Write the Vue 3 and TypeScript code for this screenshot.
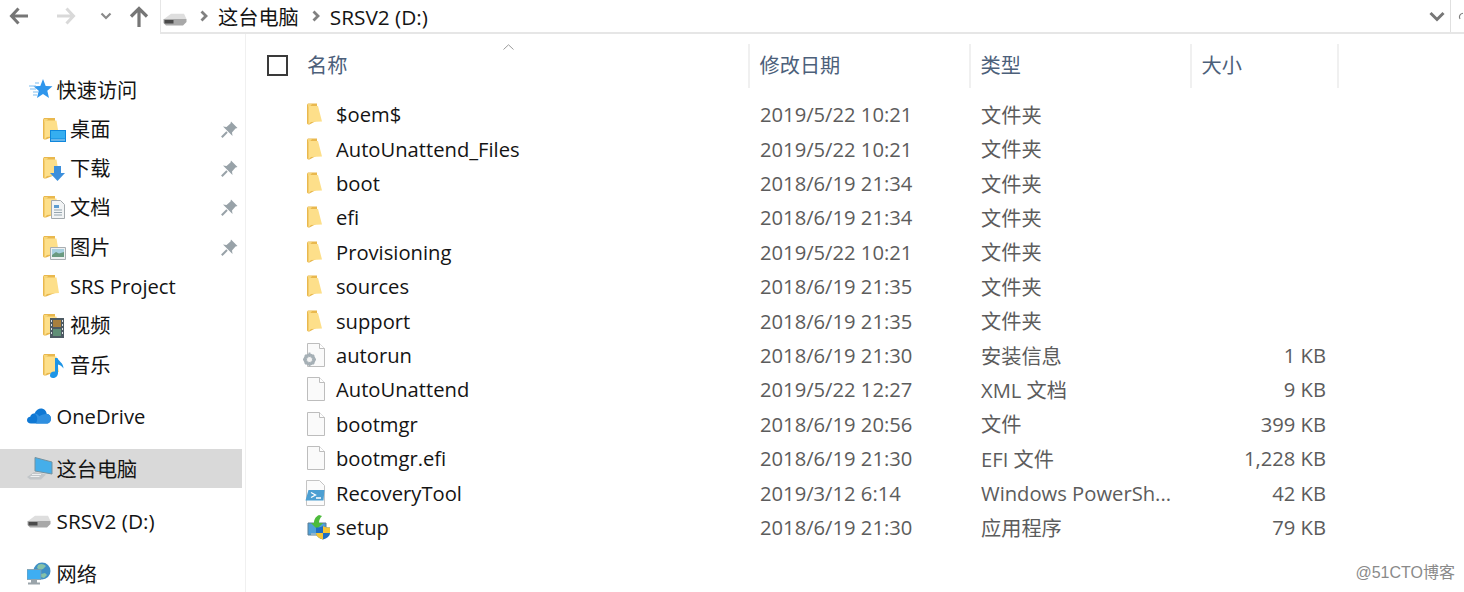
<script setup lang="ts">
interface NavItem {
  label: string
  icon: string
  pinned?: boolean
  active?: boolean
  child?: boolean
  gap?: boolean
  wide?: boolean
}

interface FileRow {
  name: string
  icon: string
  date: string
  type: string
  size?: string
}

const navItems: NavItem[] = [
  { label: '快速访问', icon: 'star' },
  { label: '桌面', icon: 'desktop', pinned: true, child: true },
  { label: '下载', icon: 'download', pinned: true, child: true },
  { label: '文档', icon: 'docs', pinned: true, child: true },
  { label: '图片', icon: 'pics', pinned: true, child: true },
  { label: 'SRS Project', icon: 'plain', child: true },
  { label: '视频', icon: 'video', child: true },
  { label: '音乐', icon: 'music', child: true },
  { label: 'OneDrive', icon: 'cloud', gap: true },
  { label: '这台电脑', icon: 'pc', active: true, gap: true },
  { label: 'SRSV2 (D:)', icon: 'drive', gap: true, wide: true },
  { label: '网络', icon: 'net', gap: true }
]

const files: FileRow[] = [
  { name: '$oem$', icon: 'folder', date: '2019/5/22 10:21', type: '文件夹' },
  { name: 'AutoUnattend_Files', icon: 'folder', date: '2019/5/22 10:21', type: '文件夹' },
  { name: 'boot', icon: 'folder', date: '2018/6/19 21:34', type: '文件夹' },
  { name: 'efi', icon: 'folder', date: '2018/6/19 21:34', type: '文件夹' },
  { name: 'Provisioning', icon: 'folder', date: '2019/5/22 10:21', type: '文件夹' },
  { name: 'sources', icon: 'folder', date: '2018/6/19 21:35', type: '文件夹' },
  { name: 'support', icon: 'folder', date: '2018/6/19 21:35', type: '文件夹' },
  { name: 'autorun', icon: 'inf', date: '2018/6/19 21:30', type: '安装信息', size: '1 KB' },
  { name: 'AutoUnattend', icon: 'page', date: '2019/5/22 12:27', type: 'XML 文档', size: '9 KB' },
  { name: 'bootmgr', icon: 'page', date: '2018/6/19 20:56', type: '文件', size: '399 KB' },
  { name: 'bootmgr.efi', icon: 'page', date: '2018/6/19 21:30', type: 'EFI 文件', size: '1,228 KB' },
  { name: 'RecoveryTool', icon: 'ps', date: '2019/3/12 6:14', type: 'Windows PowerSh...', size: '42 KB' },
  { name: 'setup', icon: 'setup', date: '2018/6/19 21:30', type: '应用程序', size: '79 KB' }
]

const folderBadges = ['desktop', 'download', 'docs', 'pics', 'plain', 'video', 'music']
</script>

<template>
  <div class="explorer">
    <header class="topbar">
      <div class="nav-buttons">
        <svg class="btn back" width="20" height="18" viewBox="0 0 20 18">
          <path d="M9.5 1.5 2.5 9l7 7.5M3 9h16" fill="none" stroke="#767676" stroke-width="3" />
        </svg>
        <svg class="btn forward" width="20" height="18" viewBox="0 0 20 18">
          <path d="M10.5 1.5l7 7.5-7 7.5M17 9H1" fill="none" stroke="#d9d9d9" stroke-width="3" />
        </svg>
        <svg class="btn recent" width="12" height="8" viewBox="0 0 12 8">
          <path d="M1.5 1.5 6 6l4.5-4.5" fill="none" stroke="#8a8a8a" stroke-width="2.2" />
        </svg>
        <svg class="btn up" width="20" height="22" viewBox="0 0 20 22">
          <path d="M2 10.5 10 2.5l8 8M10 3v18" fill="none" stroke="#767676" stroke-width="3.2" />
        </svg>
      </div>
      <div class="address">
        <svg class="addr-drive" width="24" height="13" viewBox="0 0 24 13">
          <path d="M1 6 8 .8h13L23.5 6z" fill="#dedede" />
          <path d="M.5 6h23v3L20 12.5H3L.5 10z" fill="#a8a8a8" />
          <path d="M1.5 7h9v3.5h-9z" fill="#4a4a4a" />
        </svg>
        <svg class="crumb-arrow" width="8" height="12" viewBox="0 0 8 12">
          <path d="M1.5 1.5 6 6l-4.500 4.500" fill="none" stroke="#808080" stroke-width="2.8" />
        </svg>
        <span class="crumb">这台电脑</span>
        <svg class="crumb-arrow" width="8" height="12" viewBox="0 0 8 12">
          <path d="M1.5 1.5 6 6l-4.500 4.500" fill="none" stroke="#808080" stroke-width="2.8" />
        </svg>
        <span class="crumb wide">SRSV2 (D:)</span>
        <svg class="addr-drop" width="16" height="11" viewBox="0 0 16 11">
          <path d="M1.5 2 8 8.5 14.5 2" fill="none" stroke="#777" stroke-width="3" />
        </svg>
        <div class="refresh">
          <svg width="14" height="20" viewBox="0 0 14 20">
            <path d="M12 4.5A7.5 7.5 0 0 0 6 16" fill="none" stroke="#7d7d7d" stroke-width="2.4" />
          </svg>
        </div>
      </div>
    </header>

    <div class="body">
      <aside class="sidebar">
        <div
          v-for="item in navItems"
          :key="item.label"
          class="nav-row"
          :class="{ child: item.child, active: item.active, gap: item.gap }"
        >
          <span class="nav-icon">
            <svg v-if="folderBadges.includes(item.icon)" class="side-folder" width="18" height="23" viewBox="0 0 18 23">
              <path d="M0 2.5 1 1h11v18L3 22.5H1L0 21.5z" fill="#e9b84e" />
              <path d="M1.5 3.5h12l2.5 15.5-12 1-2.5 2.500z" fill="#fddf8a" />
              <path d="M1 2h4l-1.5 2-2.500 1z" fill="#f7d679" />
            </svg>
            <svg v-if="item.icon === 'star'" class="badge star" width="26" height="21" viewBox="0 0 26 21">
              <path d="M15 0l2.700 6.900 6.800.4-5.200 4.500 1.700 7.200-6-3.900-6 3.900 1.700-7.200-5.200-4.500 6.800-.4z" fill="#2f96ec" />
              <path d="M1 7h7M2 10h6M5 13h5M5 16h4M7 4h4" stroke="#7fbdf0" stroke-width="1.2" />
            </svg>
            <svg v-if="item.icon === 'desktop'" class="badge over" width="16" height="12" viewBox="0 0 16 12">
              <path d="M0 0h16v12H0z" fill="#0f87dc" />
              <path d="M1 1h14v7.5H1z" fill="#35aef0" />
              <path d="M1 9.5h14v1H1z" fill="#bfe3f8" />
            </svg>
            <svg v-if="item.icon === 'download'" class="badge over" width="15" height="15" viewBox="0 0 15 15">
              <path d="M4 0h7v7h4l-7.500 8L0 7h4z" fill="#3c8fdc" />
            </svg>
            <svg v-if="item.icon === 'docs'" class="badge over doc" width="14" height="19" viewBox="0 0 14 19">
              <path d="M.5.5h9L13.5 4.5v14H.5z" fill="#f2f4f5" stroke="#a3a9ad" />
              <path d="M3 5h5v3H3z" fill="#5d9cd0" />
              <path d="M3 10h8M3 12.5h8M3 15h8" stroke="#96a5ae" />
            </svg>
            <svg v-if="item.icon === 'pics'" class="badge over" width="16" height="13" viewBox="0 0 16 13">
              <path d="M.5.5h15v12H.5z" fill="#eef0f1" stroke="#a8aeb2" />
              <path d="M2 2h12v6H2z" fill="#a8d0e0" />
              <path d="M2 8l4-3 3 1.500L14 5v5H2z" fill="#6a9a80" />
            </svg>
            <svg v-if="item.icon === 'video'" class="badge over" width="14" height="20" viewBox="0 0 14 20">
              <path d="M0 0h14v20H0z" fill="#4d5a63" />
              <path d="M3 2h8v7H3z" fill="#a87f3e" />
              <path d="M3 11h8v7H3z" fill="#5f8f76" />
              <path d="M1 2h1v2H1zM1 6h1v2H1zM1 10h1v2H1zM1 14h1v2H1zM12 2h1v2h-1zM12 6h1v2h-1zM12 10h1v2h-1zM12 14h1v2h-1z" fill="#dfe3e6" />
            </svg>
            <svg v-if="item.icon === 'music'" class="badge over" width="14" height="20" viewBox="0 0 14 20">
              <path d="M5 0h2.500c.5 3 6 4.500 6 10.500C12 8 10 7 8 6.500V15c0 3-2.500 5-5 5-2 0-3-1-3-2.800C0 14.500 2.500 13 5 13.500z" fill="#1e95e6" />
            </svg>
            <svg v-if="item.icon === 'cloud'" class="badge" width="24" height="16" viewBox="0 0 24 16">
              <path d="M4 15.5C1.500 15.500 0 14 0 12.200 0 10.300 1.400 9 3.200 8.800 3.600 6.500 5.500 5.200 7.500 5.500 9 2 11.500 .5 14 .5c3 0 5.300 2.200 5.600 5.200C22 6 24 8 24 10.500c0 3-2 5-4.500 5z" fill="#0f78d4" />
              <path d="M7.5 5.5C10 5.500 11.500 7 12 8.300 14 7 16 6.500 19.600 5.700 22 6 24 8 24 10.500c0 3-2 5-4.500 5H9C12 9 9 7 7.500 5.500z" fill="#2f8fe0" />
            </svg>
            <svg v-if="item.icon === 'pc'" class="badge" width="26" height="23" viewBox="0 0 26 23">
              <path d="M8 .5l17 4.500v12L8 14z" fill="#45aeea" stroke="#73919f" stroke-width="1" />
              <path d="M0 20 7 15l12 2.500-5 5H3z" fill="#c2c6c9" />
              <path d="M5 17.500h9M3.500 19.500h9" stroke="#eef0f1" />
            </svg>
            <svg v-if="item.icon === 'drive'" class="badge" width="24" height="13" viewBox="0 0 24 13">
              <path d="M1 6 8 .8h13L23.5 6z" fill="#dedede" />
              <path d="M.5 6h23v3L20 12.5H3L.5 10z" fill="#a8a8a8" />
              <path d="M1.5 7h9v3.5h-9z" fill="#4a4a4a" />
            </svg>
            <svg v-if="item.icon === 'net'" class="badge" width="24" height="23" viewBox="0 0 24 23">
              <circle cx="15" cy="9" r="8.5" fill="#3e8fc6" />
              <path d="M11 3c3-2 6-1 8 1l-3 3-3 1-3-2zM14 12l4-1 2 2-3 3-3-1z" fill="#86c2a8" />
              <path d="M0 7.5h14v10H0z" fill="#3eaef2" stroke="#7f9aa8" stroke-width=".8" />
              <path d="M4 17.5h6v3H13v2H1v-2h3z" fill="#9aa4aa" />
            </svg>
          </span>
          <span class="nav-label" :class="{ wide: item.wide }">{{ item.label }}</span>
          <svg v-if="item.pinned" class="pin" width="17" height="17" viewBox="0 0 17 17">
            <path d="M10 .5 16.5 7l-2 .5L11 11.5l.5 3.500L2 5.500l3.500.5 4-3.500z" fill="#98a2a8" />
            <path d="M6 11 .8 16.2" stroke="#98a2a8" stroke-width="2" />
          </svg>
        </div>
      </aside>

      <main class="content">
        <div class="head">
          <span class="checkbox-cell"><span class="checkbox"></span></span>
          <div class="col col-name">
            名称
            <svg class="sort" width="11" height="6" viewBox="0 0 11 6">
              <path d="M.5 5.5 5.5.8l5 4.700" fill="none" stroke="#9b9b9b" stroke-width="1" />
            </svg>
          </div>
          <div class="col col-date">修改日期</div>
          <div class="col col-type">类型</div>
          <div class="col col-size">大小</div>
        </div>

        <div class="rows">
          <div v-for="file in files" :key="file.name" class="row">
            <span class="file-icon">
              <svg v-if="file.icon === 'folder'" width="15" height="22" viewBox="0 0 15 22">
                <path d="M0 1.5 1 .5h9v17L2.5 21.5H1L0 20.500z" fill="#e9b84e" />
                <path d="M1.5 3h9.500L15 18.500l-11 .5L1.5 21.500z" fill="#fddf8a" />
                <path d="M1 1h4L3.500 3 1 4z" fill="#f7d679" />
              </svg>
              <svg v-else-if="file.icon === 'ps'" class="ps-icon" width="21" height="26" viewBox="0 0 21 26">
                <path d="M1.5.5h13l5 5v20h-18z" fill="#fbfbfb" stroke="#c4c4c4" />
                <path d="M3.5 10h16l-1 10.500H.5z" fill="#4c9fd2" />
                <path d="M6 12.5l4.500 2.500L6 17.500M11 18h5" fill="none" stroke="#fff" stroke-width="1.3" />
              </svg>
              <svg v-else-if="file.icon === 'setup'" width="24" height="25" viewBox="0 0 24 25">
                <path d="M1 8h18v12H1z" fill="#4f9fd8" stroke="#5d7e94" />
                <path d="M4 18h12v2H4z" fill="#8cb3cc" />
                <path d="M12 0c-4 2-5 5-5 8H4l6 6 6-6h-4c0-3 1-5 3-7z" fill="#4dbb3c" />
                <path d="M16 11c2 1 4 1.500 7 1.500V18c0 3-3 5.500-7 6.500-4-1-7-3.500-7-6.500v-5.500c3 0 5-.5 7-1.500z" fill="#1f6fc4" />
                <path d="M16 11c2 1 4 1.500 7 1.500V18h-7zM16 18H9c0 3 3 5.500 7 6.500z" fill="#f4c534" />
              </svg>
              <svg v-else-if="file.icon === 'inf'" class="inf-icon" width="22" height="24" viewBox="0 0 22 24">
                <path d="M4.5.5h12l5 5v18h-17z" fill="#fafafa" stroke="#bdbdbd" />
                <path d="M16.5.5v5h5" fill="#fff" stroke="#bdbdbd" />
                <circle cx="6.5" cy="16.5" r="4.5" fill="none" stroke="#a6b0b6" stroke-width="3" />
                <path d="M6.5 9.5v14M0 16.5h13M2 12l9 9M11 12l-9 9" stroke="#a6b0b6" stroke-width="1.8" />
                <circle cx="6.5" cy="16.5" r="2.5" fill="#f3f3f3" />
              </svg>
              <svg v-else width="18" height="24" viewBox="0 0 18 24">
                <path d="M.5.5h12l5 5v18H.5z" fill="#fafafa" stroke="#bdbdbd" />
                <path d="M12.5.5v5h5" fill="#fff" stroke="#bdbdbd" />
              </svg>
            </span>
            <span class="cell name">{{ file.name }}</span>
            <span class="cell date">{{ file.date }}</span>
            <span class="cell type">{{ file.type }}</span>
            <span class="cell size">{{ file.size }}</span>
          </div>
        </div>
      </main>
    </div>

    <span class="watermark">@51CTO博客</span>
  </div>
</template>

<style scoped>
.explorer {
  position: relative;
  width: 1464px;
  height: 592px;
  overflow: hidden;
  background: #fff;
  color: #141414;
  font-family: "Open Sans", "Noto Sans CJK SC", sans-serif;
  font-size: 20.2px;
}
.topbar {
  display: flex;
  height: 34px;
}
.nav-buttons {
  position: relative;
  width: 160px;
  flex: none;
}
.btn {
  position: absolute;
}
.back { left: 9px; top: 7px; }
.forward { left: 56px; top: 7px; }
.recent { left: 100px; top: 12px; }
.up { left: 129px; top: 6px; }
.address {
  flex: 1;
  display: flex;
  align-items: center;
  border-left: 1px solid #e6e6e6;
  border-bottom: 2px solid #e6e6e6;
  padding-left: 2px;
}
.addr-drive { margin: 6px 0 0; }
.crumb-arrow { margin: 0 10px 0 13px; }
.crumb { line-height: 32px; padding-top: 1px; }
.wide { font-size: 20.8px; }
.addr-drop { margin-left: auto; margin-right: 5px; }
.refresh {
  width: 14px;
  height: 32px;
  border-left: 1px solid #e0e0e0;
  display: flex;
  align-items: center;
  padding-left: 6px;
  box-sizing: border-box;
  overflow: hidden;
}
.body {
  display: flex;
  height: 558px;
}
.sidebar {
  width: 242px;
  flex: none;
  padding: 35.4px 3px 0 0;
  border-right: 1px solid #f0f0f0;
}
.nav-row {
  position: relative;
  display: flex;
  align-items: center;
  height: 39.3px;
  padding-left: 27px;
}
.nav-row.gap {
  margin-top: 13px;
}
.nav-row.active {
  background: #d9d9d9;
}
.nav-row.child {
  padding-left: 43px;
}
.nav-icon {
  position: relative;
  display: flex;
  align-items: center;
  width: 29.5px;
  height: 100%;
  flex: none;
}
.nav-row.child .nav-icon {
  width: 27px;
}
.badge.over {
  position: absolute;
  left: 7px;
  bottom: 6px;
}
.badge.over.doc {
  bottom: 8px;
  left: 8px;
}
.badge.star {
  margin-left: 1px;
}
.pin {
  position: absolute;
  left: 221px;
  top: 12px;
}
.content {
  flex: 1;
  min-width: 0;
}
.head {
  display: flex;
  height: 44px;
  margin-top: 10px;
  color: #4c607a;
}
.checkbox-cell {
  width: 61px;
  flex: none;
  display: flex;
  align-items: center;
  padding-left: 21px;
  box-sizing: border-box;
}
.checkbox {
  width: 17px;
  height: 17px;
  border: 2px solid #3a3a3a;
  background: #fff;
  margin-top: -1px;
}
.col {
  position: relative;
  display: flex;
  align-items: center;
  flex: none;
  box-sizing: border-box;
  padding: 0 0 3px 9.5px;
  border-right: 2px solid #f0f0f0;
}
.col-name {
  width: 443px;
  padding-left: 0;
}
.col-date { width: 221px; }
.col-type { width: 221px; }
.col-size { width: 147px; }
.sort {
  position: absolute;
  left: 196px;
  top: 0;
}
.rows {
  padding-top: 9px;
}
.row {
  display: flex;
  align-items: center;
  height: 34.42px;
}
.file-icon {
  width: 90px;
  flex: none;
  display: flex;
  align-items: center;
  padding-left: 61px;
  box-sizing: border-box;
}
.ps-icon {
  margin-left: -2px;
}
.inf-icon {
  margin-left: -4px;
}
.cell {
  flex: none;
  white-space: nowrap;
}
.name { width: 424px; }
.date { width: 221px; color: #5c5c5c; }
.type { width: 200px; color: #5c5c5c; }
.size { width: 145px; text-align: right; color: #5c5c5c; }
.watermark {
  position: absolute;
  right: 9px;
  bottom: 9px;
  font-family: "Liberation Sans", "Noto Sans CJK SC", sans-serif;
  font-size: 16px;
  color: #8a8a8a;
}
</style>
